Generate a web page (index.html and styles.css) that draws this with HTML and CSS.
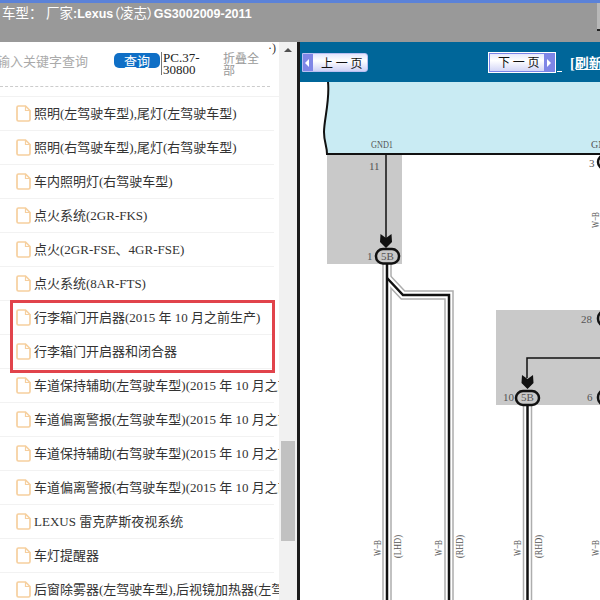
FILE: index.html
```html
<!DOCTYPE html>
<html lang="zh-CN">
<head>
    <meta charset="utf-8">
    <title>维修手册</title>
    <link rel="stylesheet" href="styles.css">
</head>
<body>
    <svg class="defs" width="0" height="0">
        <symbol id="file" viewBox="0 0 15 17">
            <path d="M1 2.5Q1 1 2.500 1H9.500L14 5.500V14.500Q14 16 12.500 16H2.500Q1 16 1 14.500Z" fill="#fff" stroke="#f6cf9e" stroke-width="1.700"/>
            <path d="M9.500 1V5.500H14" fill="none" stroke="#f6cf9e" stroke-width="1.200"/>
        </symbol>
    </svg>

    <div class="topbar">
        <div class="title"><span class="cjk">车型：</span> <span class="cjk">厂家</span>:Lexus<span class="cjk brand">（凌志）</span>GS3002009-2011</div>
        <div class="edge"></div>
    </div>

    <div class="main">
        <div class="side">
            <div class="tools">
                <span class="corner">·)</span>
                <span class="search">输入关键字查询</span>
                <span class="query">查询</span>
                <span class="code">PC.37-30800</span>
                <span class="fold">折叠全部</span>
            </div>
            <ul class="list">
                <li><svg class="ico"><use href="#file"/></svg>照明(左驾驶车型),尾灯(左驾驶车型)</li>
                <li><svg class="ico"><use href="#file"/></svg>照明(右驾驶车型),尾灯(右驾驶车型)</li>
                <li><svg class="ico"><use href="#file"/></svg>车内照明灯(右驾驶车型)</li>
                <li><svg class="ico"><use href="#file"/></svg>点火系统(2GR-FKS)</li>
                <li><svg class="ico"><use href="#file"/></svg>点火(2GR-FSE、4GR-FSE)</li>
                <li><svg class="ico"><use href="#file"/></svg>点火系统(8AR-FTS)</li>
                <li><svg class="ico"><use href="#file"/></svg>行李箱门开启器(2015 年 10 月之前生产)</li>
                <li><svg class="ico"><use href="#file"/></svg>行李箱门开启器和闭合器</li>
                <li><svg class="ico"><use href="#file"/></svg>车道保持辅助(左驾驶车型)(2015 年 10 月之前生产)</li>
                <li><svg class="ico"><use href="#file"/></svg>车道偏离警报(左驾驶车型)(2015 年 10 月之前生产)</li>
                <li><svg class="ico"><use href="#file"/></svg>车道保持辅助(右驾驶车型)(2015 年 10 月之前生产)</li>
                <li><svg class="ico"><use href="#file"/></svg>车道偏离警报(右驾驶车型)(2015 年 10 月之前生产)</li>
                <li><svg class="ico"><use href="#file"/></svg>LEXUS 雷克萨斯夜视系统</li>
                <li><svg class="ico"><use href="#file"/></svg>车灯提醒器</li>
                <li><svg class="ico"><use href="#file"/></svg>后窗除雾器(左驾驶车型),后视镜加热器(左驾驶车型)</li>
            </ul>
            <div class="mark"></div>
        </div>

        <div class="scrollbar">
            <div class="arrow"></div>
            <div class="thumb"></div>
        </div>

        <div class="view">
            <div class="nav">
                <a class="page-btn prev"><span class="cap"></span><span class="label">上 一 页</span></a>
                <a class="page-btn next"><span class="label">下 一 页</span><span class="cap"></span></a>
                <span class="dot"></span>
                <a class="refresh">[刷新]</a>
            </div>
            <svg class="diagram" viewBox="300 82 300 518" width="300" height="518">
                <!-- shaded connector areas -->
                <rect x="327" y="155" width="75" height="109" fill="#c9c9c9"/>
                <rect x="496" y="310" width="104" height="95" fill="#c9c9c9"/>

                <!-- ecu box -->
                <path d="M328 82C330 100 324 120 324 132C324 142 327 146 327 154H600V82Z" fill="#c9ebf3"/>
                <path d="M328 82C330 100 324 120 324 132C324 142 327 146 327 154H600" fill="none" stroke="#111" stroke-width="2"/>

                <!-- wires, grey casing first -->
                <g fill="none" stroke="#adadad" stroke-width="9.500">
                    <path d="M387 264V600"/>
                    <path d="M387 278L403 295H449V600"/>
                    <path d="M527.500 405V600"/>
                </g>
                <g fill="none" stroke="#fff" stroke-width="6.500">
                    <path d="M387 264V600"/>
                    <path d="M387 278L403 295H449V600"/>
                    <path d="M527.500 405V600"/>
                </g>
                <g fill="none" stroke="#111" stroke-width="2.500">
                    <path d="M387 264V600"/>
                    <path d="M387 278L403 295H449V600"/>
                    <path d="M527.500 405V600"/>
                </g>

                <!-- signal lines and arrows -->
                <path d="M386 155V240" stroke="#111" stroke-width="1.500"/>
                <path d="M527 378V358H600" fill="none" stroke="#111" stroke-width="1.500"/>
                <path class="tip" d="M380.500 234L386 238L391.500 234L392 242L386 248L380 242Z"/>
                <path class="tip" d="M522 375L527.500 379L533 375L533.500 383L527.500 389L521.500 383Z"/>

                <!-- connector pins -->
                <rect class="pin" x="376" y="249" width="23" height="14.500" rx="7"/>
                <rect class="pin" x="516" y="391" width="23" height="14" rx="7"/>
                <rect class="pin" x="598" y="155" width="24" height="14" rx="7"/>
                <rect class="pin" x="598" y="311" width="24" height="15" rx="7"/>
                <rect class="pin" x="598" y="390" width="24" height="15" rx="7"/>

                <text class="lbl" x="371" y="148" textLength="22" lengthAdjust="spacingAndGlyphs">GND1</text>
                <text class="lbl" x="591" y="148">GN</text>
                <text class="num" x="369" y="170">11</text>
                <text class="num" x="367" y="260">1</text>
                <text class="num" x="381" y="260">5B</text>
                <text class="num" x="589" y="167">3</text>
                <text class="num" x="581" y="323">28</text>
                <text class="num" x="503" y="401">10</text>
                <text class="num" x="521" y="401">5B</text>
                <text class="num" x="587" y="401">6</text>

                <text class="side-lbl" textLength="16" lengthAdjust="spacingAndGlyphs" transform="translate(381 556) rotate(-90)">W−B</text>
                <text class="side-lbl" textLength="16" lengthAdjust="spacingAndGlyphs" transform="translate(442 556) rotate(-90)">W−B</text>
                <text class="side-lbl" textLength="16" lengthAdjust="spacingAndGlyphs" transform="translate(521 556) rotate(-90)">W−B</text>
                <text class="side-lbl" textLength="16" lengthAdjust="spacingAndGlyphs" transform="translate(599 556) rotate(-90)">W−B</text>
                <text class="side-lbl" textLength="16" lengthAdjust="spacingAndGlyphs" transform="translate(599 228) rotate(-90)">W−B</text>
                <text class="side-lbl" textLength="23" lengthAdjust="spacingAndGlyphs" transform="translate(401 558) rotate(-90)">(LHD)</text>
                <text class="side-lbl" textLength="23" lengthAdjust="spacingAndGlyphs" transform="translate(463 558) rotate(-90)">(RHD)</text>
                <text class="side-lbl" textLength="23" lengthAdjust="spacingAndGlyphs" transform="translate(542 558) rotate(-90)">(RHD)</text>
            </svg>
        </div>
    </div>
</body>
</html>
```

FILE: styles.css
```css
html, body {
    margin: 0;
    height: 600px;
    overflow: hidden;
    background: #fff;
}
.defs {
    display: block;
    height: 0;
}
.topbar {
    display: flex;
    justify-content: space-between;
    height: 39px;
    background: #999;
    border-top: 3px solid #5b82d8;
}
.title {
    padding-left: 2px;
    font: bold 12.500px/18px "Liberation Sans", sans-serif;
    color: #fff;
    white-space: pre;
}
.title .cjk {
    font: 13.500px/18px "Noto Sans CJK SC", sans-serif;
}
.title .brand {
    font-feature-settings: "palt";
}
.edge {
    width: 3px;
    height: 26px;
    background: #b8b8b8;
    border-bottom: 2px solid #222;
}
.main {
    display: flex;
    height: 558px;
}

/* left tree */
.side {
    position: relative;
    width: 279px;
    overflow: hidden;
    background: #fff;
}
.tools {
    position: relative;
    display: flex;
    align-items: flex-start;
    height: 44px;
    margin: 0 9px 9px 0;
    border-bottom: 1px dashed #ccc;
}
.corner {
    position: absolute;
    top: -1px;
    right: -6px;
    font: 12px/14px "Liberation Serif", serif;
    color: #333;
}
.search {
    flex: none;
    width: 117px;
    margin: 10px 0 0 -3px;
    font: 13px/18px "Noto Sans CJK SC", sans-serif;
    color: #aaa;
}
.query {
    flex: none;
    width: 46px;
    height: 15px;
    margin-top: 11px;
    border-radius: 5px;
    background: #0f6fc6;
    color: #fff;
    font: 13px/15px "Noto Sans CJK SC", sans-serif;
    text-align: center;
}
.code {
    flex: none;
    width: 48px;
    margin: 10px 0 0 1px;
    padding-left: 1px;
    border-left: 1px solid #777;
    font: 13px/11.500px "Liberation Serif", serif;
    color: #222;
    word-break: break-word;
}
.fold {
    flex: none;
    width: 36px;
    margin: 10px 0 0 12px;
    font: 12px/12px "Noto Sans CJK SC", sans-serif;
    color: #999;
}
.list {
    margin: 0;
    padding: 0;
    list-style: none;
    border-top: 1px solid #f2f2f2;
}
.list li {
    display: flex;
    align-items: center;
    width: 258px;
    height: 33px;
    padding-left: 16px;
    margin-right: -16px;
    border-bottom: 1px solid #f2f2f2;
    font: 13px/33px "Liberation Serif", "Noto Sans CJK SC", serif;
    color: #333;
    white-space: nowrap;
}
.ico {
    flex: none;
    width: 15px;
    height: 17px;
    margin-right: 3px;
}
.mark {
    position: absolute;
    left: 10px;
    top: 258px;
    width: 259px;
    height: 67px;
    border: 3px solid #e1434b;
}

/* scrollbar */
.scrollbar {
    flex: none;
    width: 18px;
    background: #f1f1f1;
}
.arrow {
    width: 0;
    height: 0;
    margin: 6px 0 0 5px;
    border: 4px solid transparent;
    border-top: 0;
    border-bottom: 4px solid #505050;
}
.thumb {
    width: 14px;
    height: 100px;
    margin: 389px 0 0 2px;
    background: #c1c1c1;
}

/* right pane */
.view {
    flex: none;
    width: 303px;
    box-sizing: border-box;
    border-left: 3px solid #1c1c1c;
    overflow: hidden;
}
.nav {
    display: flex;
    align-items: flex-start;
    height: 40px;
    background: #006699;
    white-space: nowrap;
}
.page-btn {
    display: flex;
    flex: none;
    box-sizing: border-box;
    background: linear-gradient(#e4e6fc, #fff 40%, #cfd2f6);
    font: 12px/17px "Noto Sans CJK SC", sans-serif;
    color: #111;
}
.page-btn .cap {
    position: relative;
    flex: none;
    width: 10px;
    background: #7f86e6;
}
.page-btn .cap::after {
    content: "";
    position: absolute;
    top: 5px;
    width: 0;
    height: 0;
    border: 4px solid transparent;
}
.prev {
    width: 66px;
    height: 19px;
    margin: 11px 0 0 2px;
    border: 1px solid #b9bff2;
    border-radius: 0 3px 3px 0;
}
.prev .cap::after {
    left: -2px;
    border-right-color: #fff;
}
.prev .label {
    padding-left: 8px;
}
.next {
    width: 68px;
    height: 21px;
    margin: 10px 0 0 120px;
    border: 1px solid #fff;
    outline: 1px solid #7a84e8;
    outline-offset: -2px;
}
.next .label {
    flex: 1;
    padding-left: 9px;
}
.next .cap {
    margin: 1px 1px 1px 0;
}
.next .cap::after {
    left: 3px;
    border-left-color: #fff;
}
.dot {
    flex: none;
    width: 5px;
    height: 1px;
    margin: 29px 0 0 1px;
    background: #fff;
}
.refresh {
    flex: none;
    margin: 13px 0 0 8px;
    font: bold 14px/18px "Liberation Serif", "Noto Sans CJK SC", serif;
    color: #fff;
    text-decoration: underline;
}

/* wiring diagram */
.diagram {
    display: block;
    background: #fff;
}
.tip {
    fill: #111;
}
.pin {
    fill: none;
    stroke: #111;
    stroke-width: 2.500;
}
.lbl {
    font: 10px "Liberation Serif", serif;
    fill: #555;
}
.num {
    font: 11px "Liberation Serif", serif;
    fill: #555;
}
.side-lbl {
    font: 11px "Liberation Serif", serif;
    fill: #555;
}
```
